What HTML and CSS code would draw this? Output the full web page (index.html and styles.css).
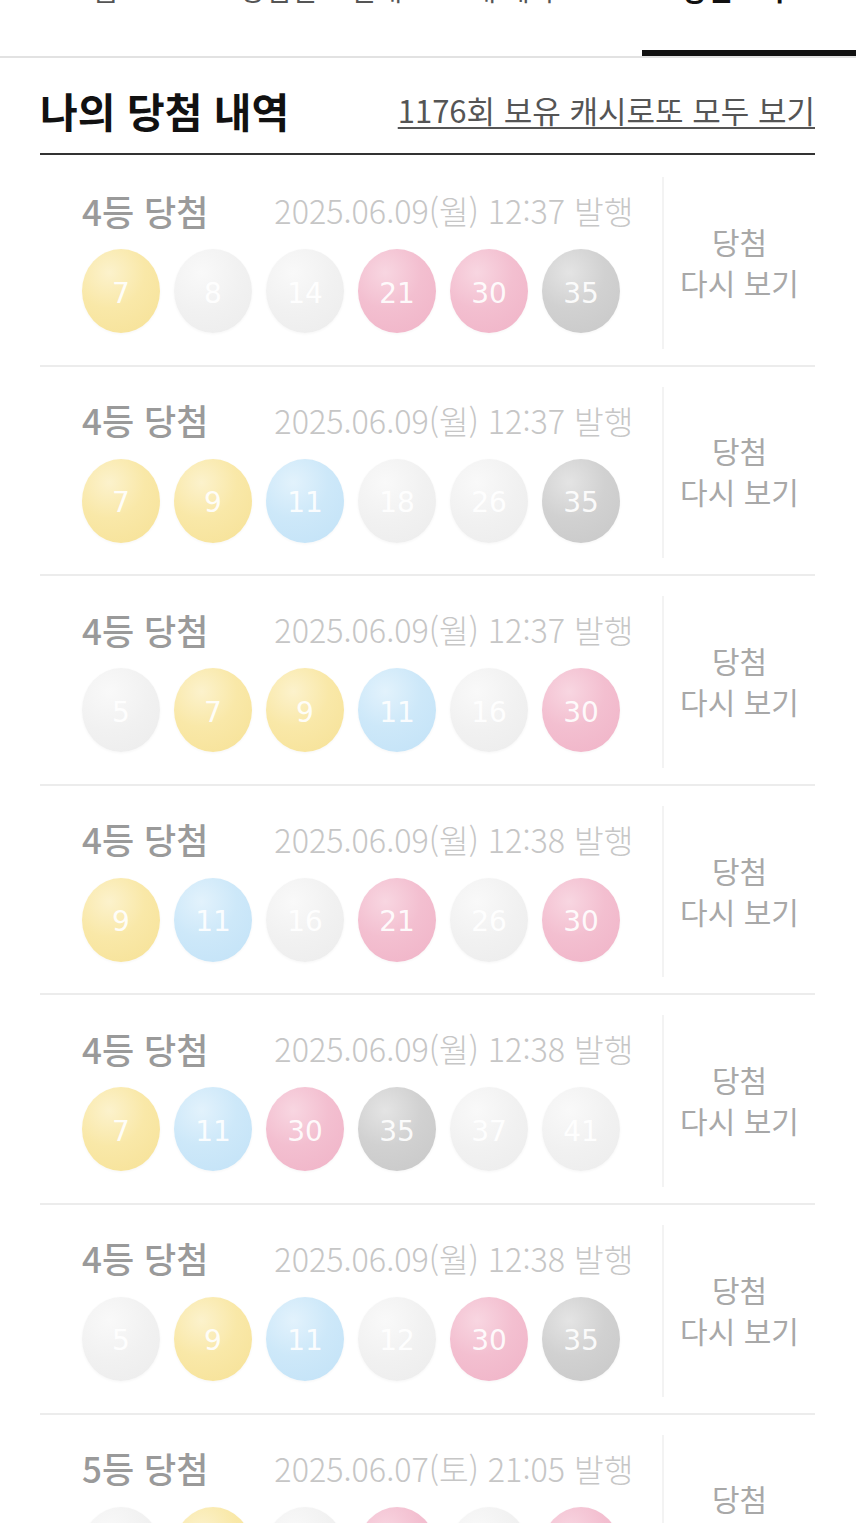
FILE: index.html
```html
<!DOCTYPE html>
<html lang="ko">
<head>
<meta charset="utf-8">
<title>나의 당첨 내역</title>
<link rel="stylesheet" href="styles.css">
</head>
<body>
<nav class="tabs">
  <div class="tab t1"><span class="lbl">홈</span></div>
  <div class="tab t2"><span class="lbl">당첨번호 안내</span></div>
  <div class="tab t3"><span class="lbl">내 계좌</span></div>
  <div class="tab t4 active"><span class="lbl">당첨조회</span></div>
</nav>
<main class="wrap">
  <header class="head">
    <h1 class="title">나의 당첨 내역</h1>
    <a class="all" href="#">1176회 보유 캐시로또 모두 보기</a>
  </header>
  <ul class="list">
    <li class="row">
      <div class="info">
        <div class="meta"><span class="rank">4등 당첨</span><span class="date">2025.06.09(월) 12:37 발행</span></div>
        <div class="balls"><span class="ball y">7</span><span class="ball f">8</span><span class="ball f">14</span><span class="ball p">21</span><span class="ball p">30</span><span class="ball g">35</span></div>
      </div>
      <div class="again">당첨<br>다시 보기</div>
    </li>
    <li class="row">
      <div class="info">
        <div class="meta"><span class="rank">4등 당첨</span><span class="date">2025.06.09(월) 12:37 발행</span></div>
        <div class="balls"><span class="ball y">7</span><span class="ball y">9</span><span class="ball b">11</span><span class="ball f">18</span><span class="ball f">26</span><span class="ball g">35</span></div>
      </div>
      <div class="again">당첨<br>다시 보기</div>
    </li>
    <li class="row">
      <div class="info">
        <div class="meta"><span class="rank">4등 당첨</span><span class="date">2025.06.09(월) 12:37 발행</span></div>
        <div class="balls"><span class="ball f">5</span><span class="ball y">7</span><span class="ball y">9</span><span class="ball b">11</span><span class="ball f">16</span><span class="ball p">30</span></div>
      </div>
      <div class="again">당첨<br>다시 보기</div>
    </li>
    <li class="row">
      <div class="info">
        <div class="meta"><span class="rank">4등 당첨</span><span class="date">2025.06.09(월) 12:38 발행</span></div>
        <div class="balls"><span class="ball y">9</span><span class="ball b">11</span><span class="ball f">16</span><span class="ball p">21</span><span class="ball f">26</span><span class="ball p">30</span></div>
      </div>
      <div class="again">당첨<br>다시 보기</div>
    </li>
    <li class="row">
      <div class="info">
        <div class="meta"><span class="rank">4등 당첨</span><span class="date">2025.06.09(월) 12:38 발행</span></div>
        <div class="balls"><span class="ball y">7</span><span class="ball b">11</span><span class="ball p">30</span><span class="ball g">35</span><span class="ball f">37</span><span class="ball f">41</span></div>
      </div>
      <div class="again">당첨<br>다시 보기</div>
    </li>
    <li class="row">
      <div class="info">
        <div class="meta"><span class="rank">4등 당첨</span><span class="date">2025.06.09(월) 12:38 발행</span></div>
        <div class="balls"><span class="ball f">5</span><span class="ball y">9</span><span class="ball b">11</span><span class="ball f">12</span><span class="ball p">30</span><span class="ball g">35</span></div>
      </div>
      <div class="again">당첨<br>다시 보기</div>
    </li>
    <li class="row">
      <div class="info">
        <div class="meta"><span class="rank">5등 당첨</span><span class="date">2025.06.07(토) 21:05 발행</span></div>
        <div class="balls"><span class="ball f">3</span><span class="ball y">7</span><span class="ball f">14</span><span class="ball p">21</span><span class="ball f">26</span><span class="ball p">30</span></div>
      </div>
      <div class="again">당첨<br>다시 보기</div>
    </li>
  </ul>
</main>
</body>
</html>
```

FILE: styles.css
```css
* { box-sizing: border-box; }
html, body { margin: 0; padding: 0; background: #fff; }
body {
  font-family: "Noto Sans CJK KR", "Noto Sans", sans-serif;
  color: #222;
  width: 856px;
  overflow: hidden;
}

/* tabs (scrolled, labels cut at top) */
.tabs {
  display: flex;
  height: 58px;
  border-bottom: 2px solid #e2e2e2;
  overflow: hidden;
}
.tab {
  height: 56px;
  font-size: 28px;
  line-height: 30px;
  color: #555;
  text-align: center;
  overflow: hidden;
}
.lbl {
  display: block;
  margin-top: -26px;
}
.t1 { width: 212px; }
.t2 { width: 218px; }
.t3 { width: 166px; }
.t4 {
  width: 214px;
  margin-left: 46px;
  padding-right: 32px;
}
.tab.active {
  color: #111;
  font-weight: 700;
  border-bottom: 6px solid #111;
}

.wrap { padding: 0 41px 0 40px; }

.head {
  height: 97px;
  padding-top: 8px;
  display: flex;
  align-items: center;
  justify-content: space-between;
  border-bottom: 2px solid #333;
}
.title {
  margin: 0;
  font-size: 41px;
  font-weight: 700;
  letter-spacing: 0;
  color: #111;
}
.all {
  font-size: 31px;
  color: #555;
  text-decoration: underline;
  text-underline-offset: 4px;
  text-decoration-thickness: 2px;
  letter-spacing: 0;
}

.list { list-style: none; margin: 2px 0 0; padding: 0; }
.row {
  display: flex;
  height: 209.6px;
  border-bottom: 2px solid #ececec;
}
.info {
  flex: 1;
  padding: 33px 0 0 42px;
}
.meta {
  display: flex;
  align-items: center;
  gap: 66px;
  height: 40px;
}
.rank {
  font-size: 35px;
  font-weight: 500;
  color: #9a9a9a;
}
.date {
  font-size: 32.3px;
  font-weight: 300;
  color: #c6c6c6;
}
.balls {
  display: flex;
  gap: 14px;
  margin-top: 19px;
}
.ball {
  width: 78px;
  height: 84px;
  border-radius: 50%;
  display: flex;
  align-items: center;
  justify-content: center;
  font-family: "DejaVu Sans", sans-serif;
  font-size: 28px;
  padding-top: 4px;
  color: rgba(255, 255, 255, 0.92);
  box-shadow: 0 1px 3px rgba(0, 0, 0, 0.04);
}
.ball.y { background: radial-gradient(circle at 35% 28%, #fcf2cc 0%, #f9e8a8 45%, #f6e196 100%); }
.ball.b { background: radial-gradient(circle at 35% 28%, #e2f2fc 0%, #cde8f9 45%, #c2e2f7 100%); }
.ball.p { background: radial-gradient(circle at 35% 28%, #f8d6e1 0%, #f3bfd0 45%, #f0b3c7 100%); }
.ball.g { background: radial-gradient(circle at 35% 28%, #e4e4e4 0%, #d1d1d1 45%, #c8c8c8 100%); }
.ball.f { background: radial-gradient(circle at 35% 28%, #f9f9f9 0%, #f1f1f1 50%, #ececec 100%); color: rgba(255,255,255,0.95); }

.again {
  width: 153px;
  margin: 20px 0 16px;
  border-left: 2px solid #f3f3f3;
  display: flex;
  align-items: center;
  justify-content: center;
  text-align: center;
  font-size: 30px;
  line-height: 41px;
  color: #a8a8a8;
  padding-bottom: 2px;
}
```
